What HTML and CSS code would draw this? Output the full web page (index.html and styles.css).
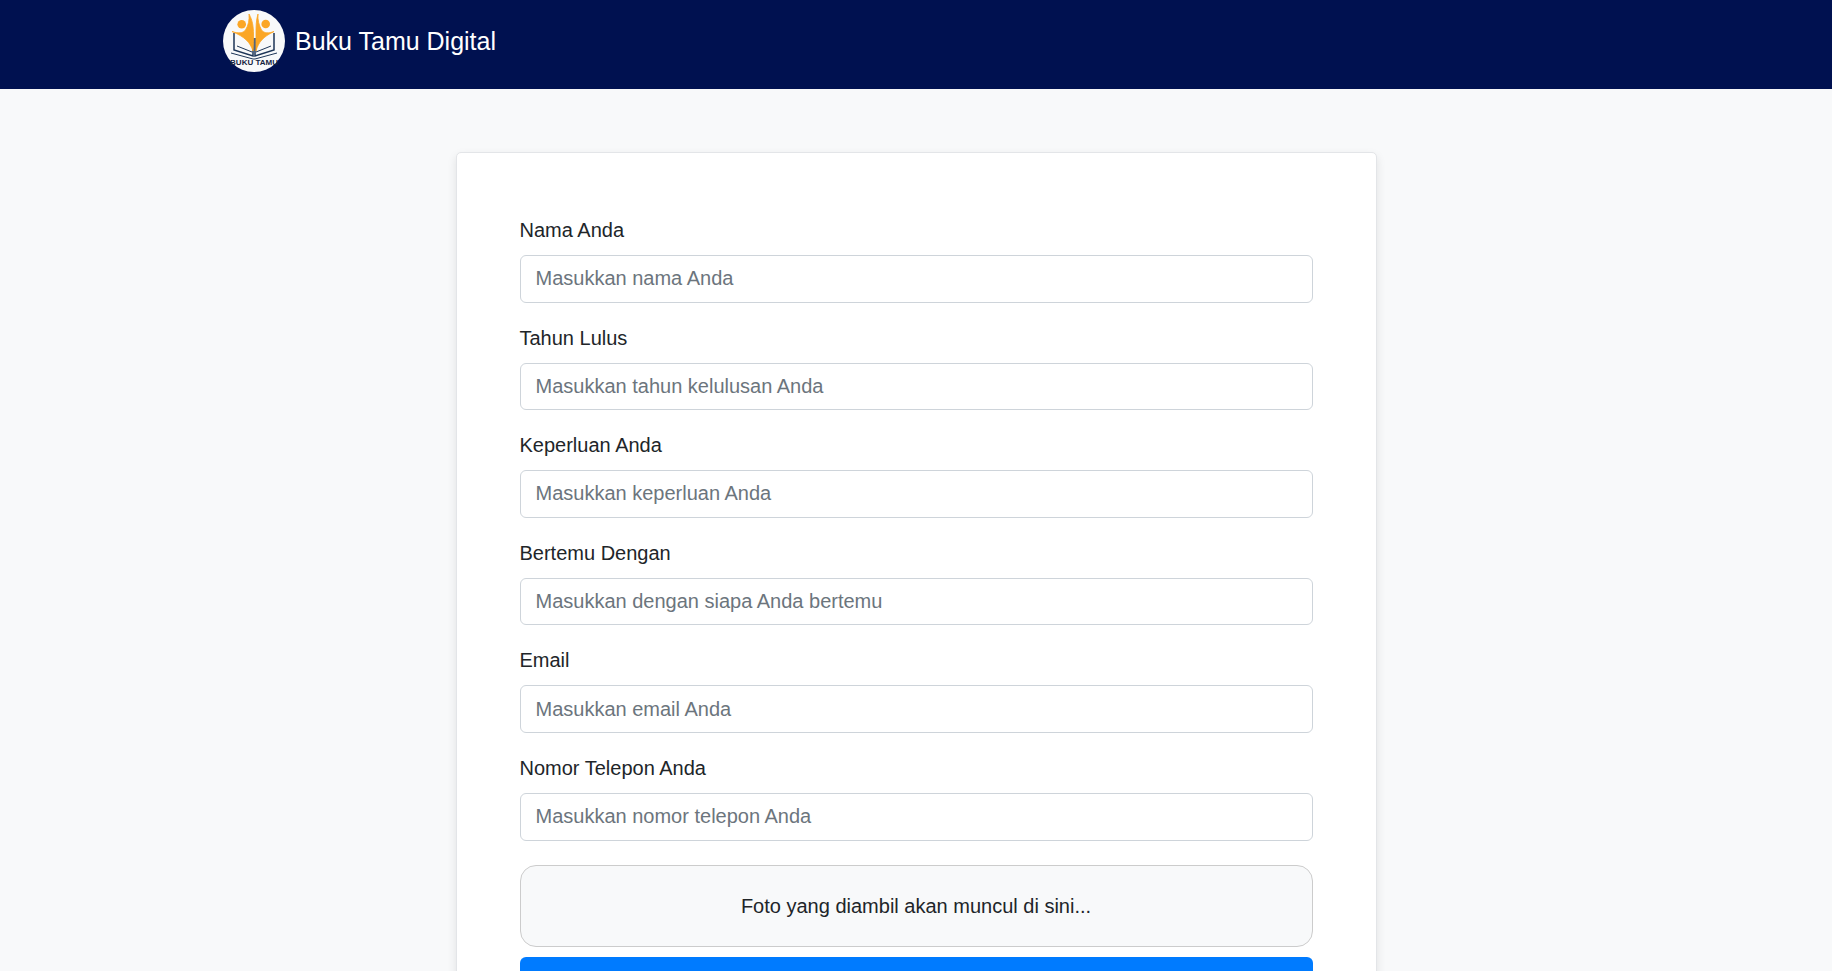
FILE: index.html
```html
<!DOCTYPE html>
<html lang="id">
<head>
<meta charset="utf-8">
<title>Buku Tamu Digital</title>
<link rel="stylesheet" href="styles.css">
</head>
<body>
<header class="navbar">
  <div class="brand">
    <svg class="logo" viewBox="0 0 62 62" role="img" aria-label="Logo Buku Tamu">
      <circle cx="31" cy="31" r="31" fill="#f8f9fa"/>
      <path d="M11 23V40L30 46V28M51 23V40L32 46V28" fill="none" stroke="#1d3557" stroke-width="1.500"/>
      <path d="M14 36L29 42M48 36L33 42M8 43L30 49H32L54 43" fill="none" stroke="#1d3557" stroke-width="1"/>
      <path class="logo-figure" d="M26 4C29.500 10 30.500 17 30.500 24C30.500 30 30.500 35 30 41C27 32 22 27 9 21.500C15 23.500 20 23.500 22.500 20C25.500 15 26.500 10 26 4Z"/>
      <path class="logo-figure" d="M35 4C33 10 33 17 33 24C33 30 33 35 33 41C35.500 32 40 27 51 21.500C46 23.500 41 23.500 38.500 20C36 15 34.500 10 35 4Z"/>
      <circle cx="18.700" cy="14.300" r="4.300" fill="#fba625"/>
      <circle cx="42.700" cy="14" r="4.300" fill="#fba625"/>
      <text class="logo-text" x="31" y="55" text-anchor="middle">BUKU TAMU</text>
    </svg>
    <span class="brand-name">Buku Tamu Digital</span>
  </div>
</header>
<main class="page">
  <form class="card">
    <div class="field">
      <label class="field-label" for="nama">Nama Anda</label>
      <input class="field-input" id="nama" type="text" placeholder="Masukkan nama Anda">
    </div>
    <div class="field">
      <label class="field-label" for="tahun">Tahun Lulus</label>
      <input class="field-input" id="tahun" type="text" placeholder="Masukkan tahun kelulusan Anda">
    </div>
    <div class="field">
      <label class="field-label" for="keperluan">Keperluan Anda</label>
      <input class="field-input" id="keperluan" type="text" placeholder="Masukkan keperluan Anda">
    </div>
    <div class="field">
      <label class="field-label" for="bertemu">Bertemu Dengan</label>
      <input class="field-input" id="bertemu" type="text" placeholder="Masukkan dengan siapa Anda bertemu">
    </div>
    <div class="field">
      <label class="field-label" for="email">Email</label>
      <input class="field-input" id="email" type="text" placeholder="Masukkan email Anda">
    </div>
    <div class="field">
      <label class="field-label" for="telepon">Nomor Telepon Anda</label>
      <input class="field-input" id="telepon" type="text" placeholder="Masukkan nomor telepon Anda">
    </div>
    <div class="photo-box">Foto yang diambil akan muncul di sini...</div>
    <button class="primary-btn" type="button"></button>
  </form>
</main>
</body>
</html>
```

FILE: styles.css
```css
* { box-sizing: border-box; }
html, body { margin: 0; height: 100%; overflow: hidden; }
body {
  background: #f8f9fa;
  color: #212529;
  font-family: "Liberation Sans", Arial, sans-serif;
  font-size: 20px;
  line-height: 1.5;
}
.navbar {
  background: #001150;
  height: 89px;
  padding-left: 223px;
  display: flex;
  align-items: flex-start;
}
.brand {
  display: flex;
  align-items: center;
  gap: 10px;
  padding-top: 10px;
}
.logo { width: 62px; height: 62px; display: block; }
.logo-figure { fill: #fba625; stroke: #fba625; stroke-width: .8; stroke-linejoin: round; }
.logo-text { font: bold 8px "Liberation Sans", Arial, sans-serif; fill: #14233f; }
.brand-name { color: #fff; font-size: 25px; line-height: 62px; height: 62px; }
.page { padding-top: 62.6px; display: flex; justify-content: center; }
.card {
  width: 921px;
  background: #fff;
  border: 1px solid #e3e5e8;
  border-radius: 5px;
  box-shadow: 0 4px 10px rgba(0, 0, 0, .1);
  padding: 62.4px 63px 40px;
}
.field { margin-bottom: 20px; }
.field-label { display: block; margin-bottom: 10px; line-height: 30px; }
.field-input {
  display: block;
  width: 100%;
  height: 47.6px;
  padding: 0 15px;
  background: #fff;
  border: 1px solid #ced4da;
  border-radius: 6px;
  color: #212529;
  font: inherit;
}
.field-input::placeholder { color: #6c757d; opacity: 1; }
.photo-box {
  height: 82px;
  margin-top: 24.4px;
  border: 1px solid #ccc;
  border-radius: 16px;
  background: #f8f9fa;
  display: flex;
  align-items: center;
  justify-content: center;
}
.primary-btn {
  display: block;
  width: 100%;
  height: 48px;
  margin-top: 10px;
  background: #007bff;
  color: #fff;
  border: 0;
  border-radius: 6px;
  font: inherit;
}
```
